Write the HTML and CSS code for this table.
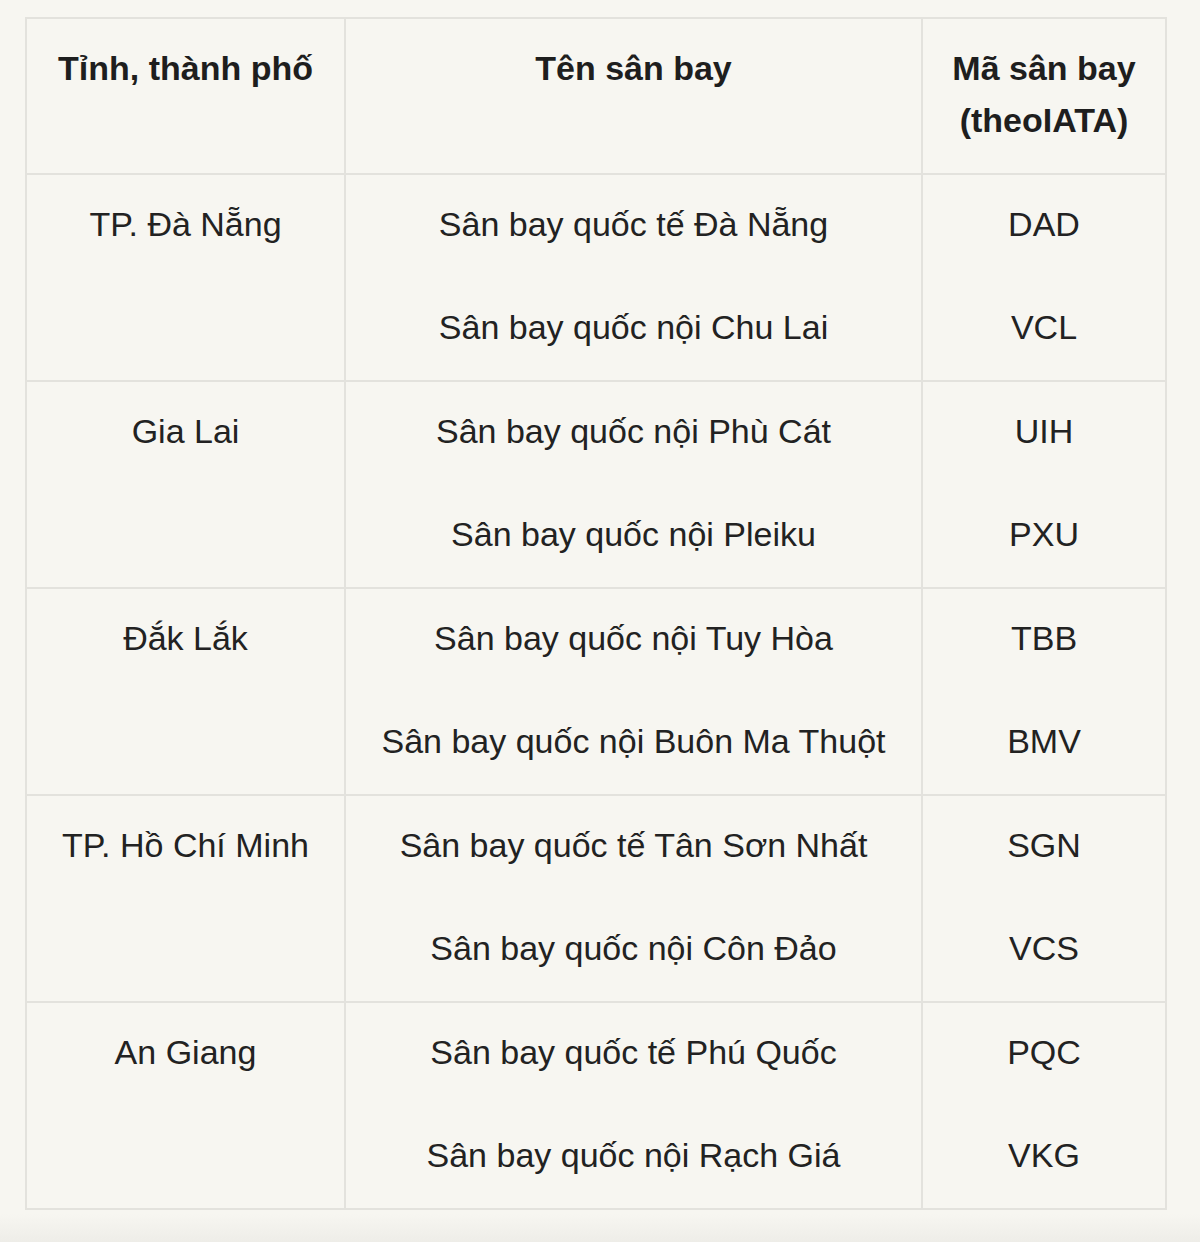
FILE: index.html
```html
<!DOCTYPE html>
<html lang="vi">
<head>
<meta charset="utf-8">
<link rel="stylesheet" href="styles.css">
</head>
<body>
<div class="page">
  <table class="airports">
    <colgroup>
      <col class="c1"><col class="c2"><col class="c3">
    </colgroup>
    <thead>
      <tr>
        <th>Tỉnh, thành phố</th>
        <th>Tên sân bay</th>
        <th>Mã sân bay<br>(theoIATA)</th>
      </tr>
    </thead>
    <tbody>
      <tr>
        <td><div class="stack"><span>TP. Đà Nẵng</span></div></td>
        <td><div class="stack"><span>Sân bay quốc tế Đà Nẵng</span><span>Sân bay quốc nội Chu Lai</span></div></td>
        <td><div class="stack"><span>DAD</span><span>VCL</span></div></td>
      </tr>
      <tr>
        <td><div class="stack"><span>Gia Lai</span></div></td>
        <td><div class="stack"><span>Sân bay quốc nội Phù Cát</span><span>Sân bay quốc nội Pleiku</span></div></td>
        <td><div class="stack"><span>UIH</span><span>PXU</span></div></td>
      </tr>
      <tr>
        <td><div class="stack"><span>Đắk Lắk</span></div></td>
        <td><div class="stack"><span>Sân bay quốc nội Tuy Hòa</span><span>Sân bay quốc nội Buôn Ma Thuột</span></div></td>
        <td><div class="stack"><span>TBB</span><span>BMV</span></div></td>
      </tr>
      <tr>
        <td><div class="stack"><span>TP. Hồ Chí Minh</span></div></td>
        <td><div class="stack"><span>Sân bay quốc tế Tân Sơn Nhất</span><span>Sân bay quốc nội Côn Đảo</span></div></td>
        <td><div class="stack"><span>SGN</span><span>VCS</span></div></td>
      </tr>
      <tr>
        <td><div class="stack"><span>An Giang</span></div></td>
        <td><div class="stack"><span>Sân bay quốc tế Phú Quốc</span><span>Sân bay quốc nội Rạch Giá</span></div></td>
        <td><div class="stack"><span>PQC</span><span>VKG</span></div></td>
      </tr>
    </tbody>
  </table>
</div>
<div class="fade"></div>
</body>
</html>
```

FILE: styles.css
```css
html, body {
  margin: 0;
  padding: 0;
  background: #f7f6f1;
}
body {
  font-family: "Liberation Sans", Arial, sans-serif;
  color: #222222;
  height: 1242px;
  overflow: hidden;
  position: relative;
}
.page {
  padding: 17px 35px 0 25px;
}
.airports {
  width: 1140px;
  border-collapse: collapse;
  table-layout: fixed;
  border: 2px solid #e3e2dd;
}
.c1 { width: 319px; }
.c2 { width: 577px; }
.c3 { width: 244px; }
.airports th,
.airports td {
  border: 2px solid #e3e2dd;
  padding: 23px 4px 27px;
  text-align: center;
  vertical-align: top;
  font-size: 34px;
  line-height: 52px;
}
.airports th {
  font-weight: bold;
  color: #1e1e1e;
}
.airports td {
  font-weight: normal;
}
.stack {
  display: flex;
  flex-direction: column;
  align-items: center;
  gap: 51px;
  min-height: 155px;
}
.fade {
  position: absolute;
  left: 0;
  right: 0;
  bottom: 0;
  height: 28px;
  background: linear-gradient(#f7f6f1, #eeede8);
}
```
